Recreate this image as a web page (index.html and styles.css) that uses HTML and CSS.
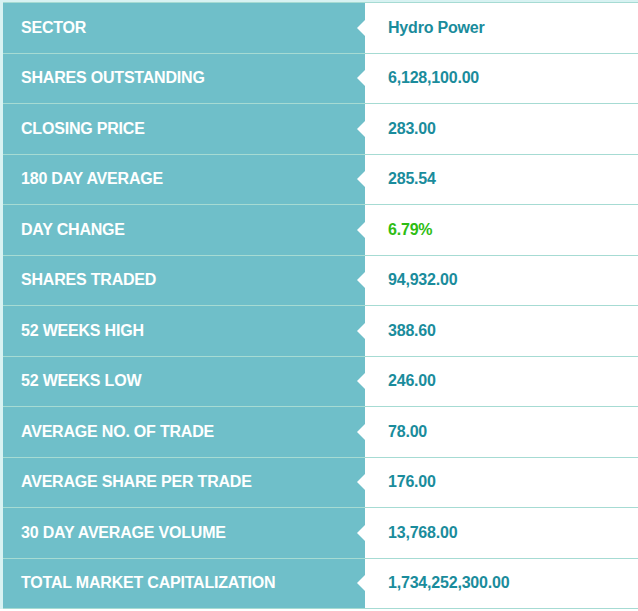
FILE: index.html
```html
<!DOCTYPE html>
<html>
<head>
<meta charset="utf-8">
<link rel="stylesheet" href="styles.css">
</head>
<body>
<div class="stats">
  <div class="row"><div class="label">SECTOR</div><div class="value">Hydro Power</div></div>
  <div class="row"><div class="label">SHARES OUTSTANDING</div><div class="value">6,128,100.00</div></div>
  <div class="row"><div class="label">CLOSING PRICE</div><div class="value">283.00</div></div>
  <div class="row"><div class="label">180 DAY AVERAGE</div><div class="value">285.54</div></div>
  <div class="row"><div class="label">DAY CHANGE</div><div class="value up">6.79%</div></div>
  <div class="row"><div class="label">SHARES TRADED</div><div class="value">94,932.00</div></div>
  <div class="row"><div class="label">52 WEEKS HIGH</div><div class="value">388.60</div></div>
  <div class="row"><div class="label">52 WEEKS LOW</div><div class="value">246.00</div></div>
  <div class="row"><div class="label">AVERAGE NO. OF TRADE</div><div class="value">78.00</div></div>
  <div class="row"><div class="label">AVERAGE SHARE PER TRADE</div><div class="value">176.00</div></div>
  <div class="row"><div class="label">30 DAY AVERAGE VOLUME</div><div class="value">13,768.00</div></div>
  <div class="row"><div class="label">TOTAL MARKET CAPITALIZATION</div><div class="value">1,734,252,300.00</div></div>
</div>
</body>
</html>
```
FILE: styles.css
```css
html, body {
  margin: 0;
  padding: 0;
  background: #ffffff;
}
body {
  font-family: "Liberation Sans", Arial, sans-serif;
  font-weight: bold;
  font-size: 16px;
  letter-spacing: -0.2px;
}
.stats {
  width: 635px;
  border-top: 2px solid #d8f2f2;
  border-left: 3px solid #d8f2f2;
}
.row {
  display: grid;
  grid-template-columns: 362px 1fr;
  height: 49.5px;
  border-bottom: 1px solid #a6dbd3;
}
.row:first-child {
  border-top: 1px solid #a6dbd3;
}
.label {
  position: relative;
  background: #6fbfc9;
  color: #ffffff;
  display: flex;
  align-items: center;
  padding-left: 18px;
}
.label::after {
  content: "";
  position: absolute;
  right: 0;
  top: 50%;
  margin-top: -8px;
  border-top: 8px solid transparent;
  border-bottom: 8px solid transparent;
  border-right: 8px solid #ffffff;
}
.value {
  color: #1a8c9c;
  display: flex;
  align-items: center;
  padding-left: 23px;
}
.value.up {
  color: #2ebd14;
}
```
